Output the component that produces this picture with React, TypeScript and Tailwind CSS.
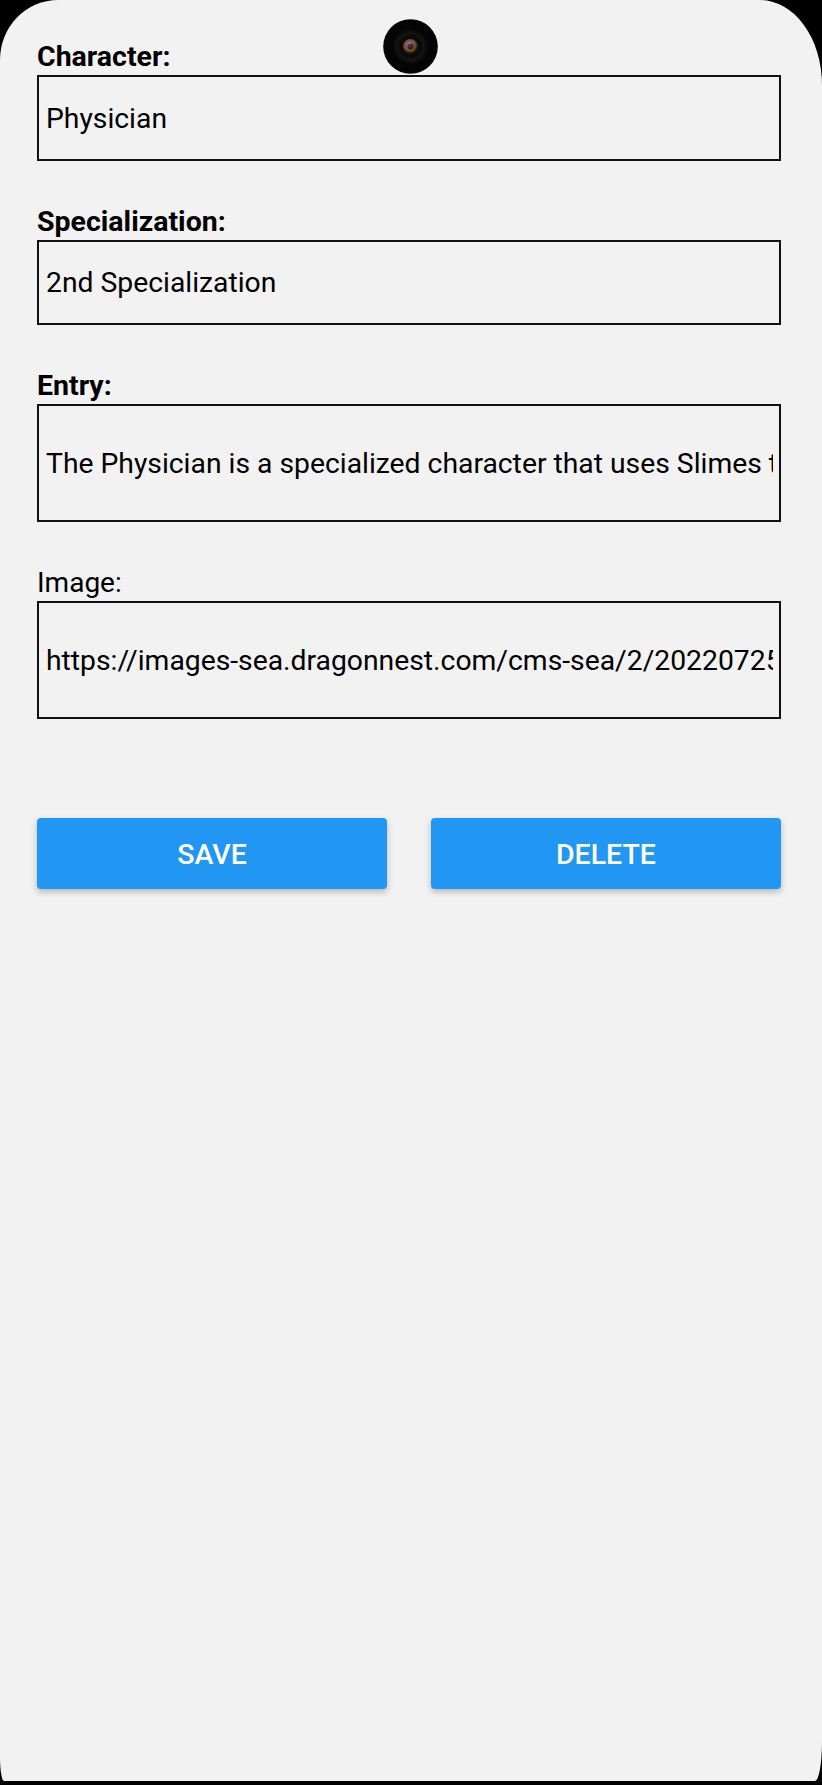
import React from "react";

type Field = {
  label: string;
  value: string;
  bold: boolean;
  tall: boolean;
};

const fields: Field[] = [
  { label: "Character:", value: "Physician", bold: true, tall: false },
  { label: "Specialization:", value: "2nd Specialization", bold: true, tall: false },
  {
    label: "Entry:",
    value: "The Physician is a specialized character that uses Slimes to heal allies.",
    bold: true,
    tall: true,
  },
  {
    label: "Image:",
    value: "https://images-sea.dragonnest.com/cms-sea/2/20220725/physician.png",
    bold: false,
    tall: true,
  },
];

function Camera() {
  return (
    <svg
      className="absolute left-[383px] top-[19px]"
      width="55"
      height="55"
      viewBox="0 0 55 55"
    >
      <defs>
        <radialGradient id="ring" cx="50%" cy="50%" r="50%">
          <stop offset="0%" stopColor="#2a2a2a" />
          <stop offset="70%" stopColor="#151515" />
          <stop offset="100%" stopColor="#050505" />
        </radialGradient>
        <radialGradient id="lens" cx="45%" cy="40%" r="55%">
          <stop offset="0%" stopColor="#e6a8e8" />
          <stop offset="35%" stopColor="#8a5a7a" />
          <stop offset="70%" stopColor="#6b5420" />
          <stop offset="100%" stopColor="#1a1408" />
        </radialGradient>
      </defs>
      <circle cx="27.5" cy="27.5" r="27.3" fill="#040404" />
      <circle cx="27.5" cy="27.5" r="18" fill="url(#ring)" />
      <circle cx="27.5" cy="27.5" r="12" fill="#0a0a0a" />
      <circle cx="27.5" cy="27.5" r="7.5" fill="url(#lens)" />
      <circle cx="27.5" cy="27.5" r="3" fill="#120a12" opacity="0.7" />
    </svg>
  );
}

export default function App() {
  return (
    <div className="w-[822px] h-[1785px] bg-black font-['Roboto',sans-serif] text-black">
      <div className="relative h-[1781px] bg-[#f2f2f2] rounded-tl-[58px_60px] rounded-tr-[62px_85px] rounded-bl-[4px_24px] rounded-br-[7px_40px] overflow-hidden">
        <Camera />

        <div className="pl-[37px] pr-[41px] pt-[41px]">
          {fields.map((f, i) => (
            <div key={f.label} className={i === 0 ? "" : "mt-[45px]"}>
              <div
                className={
                  f.bold
                    ? "text-[28.5px] leading-[32px] font-bold"
                    : "text-[28px] leading-[32px] font-normal"
                }
              >
                {f.label}
              </div>
              <div
                className={
                  (f.tall ? "h-[118px]" : i === 0 ? "h-[86px]" : "h-[85px]") +
                  " mt-[2px] flex items-center border-2 border-[#111] pl-[7px] pr-[6px] pt-[2px]"
                }
              >
                <div className="w-full overflow-hidden whitespace-nowrap text-[28.3px]">
                  {f.value}
                </div>
              </div>
            </div>
          ))}

          <div className="mt-[99px] grid grid-cols-2 gap-[44px]">
            <button className="h-[71px] pt-[4px] rounded-[4px] bg-[#2196f3] text-white text-[28.5px] font-medium uppercase shadow-[0_3px_6px_rgba(0,0,0,0.25)]">
              Save
            </button>
            <button className="h-[71px] pt-[4px] rounded-[4px] bg-[#2196f3] text-white text-[28.5px] font-medium uppercase shadow-[0_3px_6px_rgba(0,0,0,0.25)]">
              Delete
            </button>
          </div>
        </div>
      </div>
    </div>
  );
}
